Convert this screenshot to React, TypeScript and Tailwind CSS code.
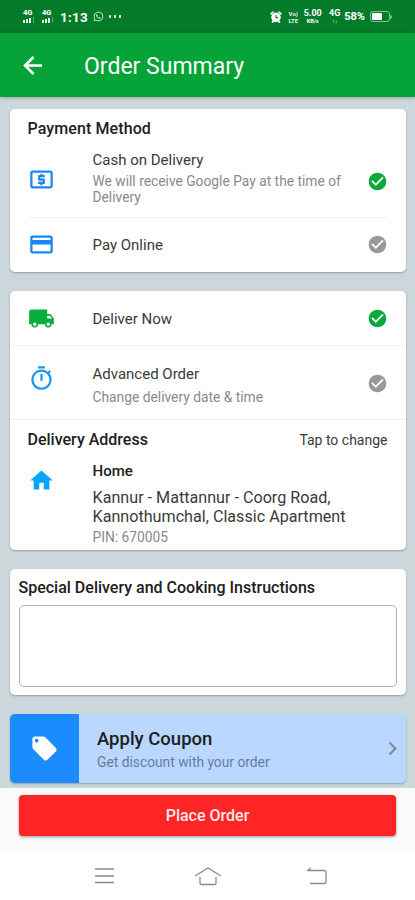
import { useState, type ReactNode } from 'react';
import {
  MdCheckCircle,
  MdChevronRight,
  MdHome,
  MdLocalOffer,
  MdLocalShipping,
  MdOutlineCreditCard,
  MdOutlineTimer,
} from 'react-icons/md';
import { FaWhatsapp } from 'react-icons/fa';

function BackIcon() {
  return (
    <svg viewBox="0 0 27 27" className="h-[27px] w-[27px]" fill="none" stroke="white" strokeWidth="2.600">
      <path d="M23 13.500H6.500M14.500 5L6 13.500L14.500 22" />
    </svg>
  );
}

function CashIcon() {
  return (
    <svg viewBox="0 0 24 24" className="h-[27px] w-[27px] text-[#1a86f5]" fill="currentColor">
      <path d="M20 4H4C2.900 4 2 4.900 2 6v12c0 1.100.9 2 2 2h16c1.100 0 2-.9 2-2V6c0-1.100-.9-2-2-2zm0 14H4V6h16v12z" />
      <path d="M11 17h2v-1h1c.55 0 1-.45 1-1v-3c0-.55-.45-1-1-1h-3v-1h4V8h-2V7h-2v1h-1c-.55 0-1 .45-1 1v3c0 .55.45 1 1 1h3v1H9v2h2v1z" />
    </svg>
  );
}

function AlarmIcon() {
  return (
    <svg viewBox="0 0 12 12" className="h-3 w-3">
      <path d="M1 2.800L3 1M11 2.800L9 1M2.500 11.300l1-1.300M9.500 11.300l-1-1.300" stroke="white" strokeWidth="1.6" strokeLinecap="round" />
      <circle cx="6" cy="6.300" r="4.800" fill="white" />
      <path d="M6 3.900v2.700h1.900" stroke="#047b29" strokeWidth="1.100" fill="none" />
    </svg>
  );
}

function SignalIcon() {
  return (
    <div className="flex w-3 flex-col">
      <span className="text-[7.5px] leading-[6px] font-bold">4G</span>
      <svg viewBox="0 0 12 6" className="mt-px h-1.5 w-3" fill="currentColor">
        <path d="M0 3h2v3H0zM3 2h2v4H3zM6 1h2v5H6z" />
        <path d="M10 0h1v6h-1z" opacity="0.35" />
      </svg>
    </div>
  );
}

function Stacked({ top, bottom }: { top: string; bottom: string }) {
  return (
    <div className="flex flex-col items-center font-bold">
      <span className="text-[9px] leading-[9px]">{top}</span>
      <span className="text-[5.500px] leading-[6px]">{bottom}</span>
    </div>
  );
}

function StatusBar() {
  return (
    <div className="flex h-[33px] shrink-0 items-center bg-[#047b29] pr-[23px] pl-[23px] text-white">
      <SignalIcon />
      <div className="ml-[7px]">
        <SignalIcon />
      </div>
      <span className="ml-[6px] pt-px text-[13.5px] font-bold tracking-[0.2px]">1:13</span>
      <FaWhatsapp className="ml-[5px] h-[11px] w-[11px] opacity-80" />
      <div className="ml-[5px] flex gap-[2.5px]">
        <i className="h-[2.5px] w-[2.5px] rounded-full bg-white" />
        <i className="h-[2.5px] w-[2.5px] rounded-full bg-white" />
        <i className="h-[2.5px] w-[2.5px] rounded-full bg-white" />
      </div>

      <div className="ml-auto flex items-center">
        <AlarmIcon />
        <div className="ml-[4px] flex w-[14px] flex-col items-center text-[6px] leading-[7px] font-bold opacity-90">
          <span>Vo)</span>
          <span>LTE</span>
        </div>
        <div className="ml-[3px] w-[19px]">
          <Stacked top="5.00" bottom="KB/s" />
        </div>
        <div className="ml-[6px] w-[13px]">
          <Stacked top="4G" bottom="↑↓" />
        </div>
        <span className="ml-[3px] pt-px text-[11px] font-bold">58%</span>
        <div className="ml-[5px] flex h-[11px] w-[20px] rounded-[3px] border border-white/50 p-px">
          <div className="w-[10px] rounded-[1px] bg-white" />
        </div>
        <div className="h-1 w-0.5 rounded-r bg-white/50" />
      </div>
    </div>
  );
}

function Card({ className, children }: { className: string; children: ReactNode }) {
  return (
    <section className={`overflow-hidden rounded-[5px] bg-white shadow-[0_1px_2px_rgba(0,0,0,0.28)] ${className}`}>
      {children}
    </section>
  );
}

function Check({ active, onClick }: { active: boolean; onClick: () => void }) {
  return (
    <button onClick={onClick} className="ml-auto">
      <MdCheckCircle className={`h-[21px] w-[21px] ${active ? 'text-[#08a839]' : 'text-[#989898]'}`} />
    </button>
  );
}

export default function App() {
  const [payment, setPayment] = useState('cash');
  const [schedule, setSchedule] = useState('now');

  return (
    <div className="flex h-[900px] w-[415px] flex-col overflow-hidden bg-[#ccd7dc] font-['Roboto',sans-serif] text-[#3a3a3a]">
      <StatusBar />
      <header className="flex h-16 shrink-0 items-center bg-[#05a338] pl-[19px] text-white shadow-[0_1px_4px_rgba(0,0,0,0.25)]">
        <BackIcon />
        <h1 className="ml-[38px] pt-1 text-[23px]">Order Summary</h1>
      </header>

      <main className="flex min-h-0 flex-1 flex-col gap-[19px] px-[9.5px] pt-3">
        {/* Payment */}
        <Card className="h-[163px] shrink-0 px-[18px] pt-[10px]">
          <h2 className="text-[16px] leading-5 font-medium tracking-[0.1px] text-[#202020]">Payment Method</h2>
          <div className="flex h-[79px] border-b border-[#f0f0f0] pt-[11px]">
            <div className="w-[65px] pt-4">
              <CashIcon />
            </div>
            <div className="w-[262px]">
              <p className="text-[15px] leading-5">Cash on Delivery</p>
              <p className="mt-[3px] text-[13.8px] leading-4 text-[#8a8a8a]">
                We will receive Google Pay at the time of Delivery
              </p>
            </div>
            <div className="ml-auto pt-[21px]">
              <Check active={payment === 'cash'} onClick={() => setPayment('cash')} />
            </div>
          </div>
          <div className="flex h-[53px] items-center">
            <div className="w-[65px]">
              <MdOutlineCreditCard className="h-[27px] w-[27px] text-[#1a86f5]" />
            </div>
            <p className="pt-px text-[15px]">Pay Online</p>
            <Check active={payment === 'online'} onClick={() => setPayment('online')} />
          </div>
        </Card>

        {/* Delivery time and address */}
        <Card className="h-[259px] shrink-0">
          <div className="flex h-[55px] items-center border-b border-[#f0f0f0] px-[18px]">
            <div className="w-[65px]">
              <MdLocalShipping className="h-[27px] w-[27px] text-[#08ad3c]" />
            </div>
            <p className="pt-[2px] text-[15px]">Deliver Now</p>
            <Check active={schedule === 'now'} onClick={() => setSchedule('now')} />
          </div>
          <div className="flex h-[74px] border-b border-[#f0f0f0] px-[18px] pt-[18px]">
            <div className="w-[65px] pt-[1px]">
              <MdOutlineTimer className="h-[27px] w-[27px] text-[#1a96f0]" />
            </div>
            <div>
              <p className="text-[15px] leading-5">Advanced Order</p>
              <p className="mt-[3px] text-[13.8px] leading-5 text-[#8a8a8a]">Change delivery date &amp; time</p>
            </div>
            <div className="ml-auto pt-[9px]">
              <Check active={schedule === 'later'} onClick={() => setSchedule('later')} />
            </div>
          </div>
          <div className="px-[18px] pt-[10px]">
            <div className="flex items-center justify-between">
              <h2 className="text-[16px] leading-5 font-medium text-[#202020]">Delivery Address</h2>
              <button className="text-[14px] leading-[18px]">Tap to change</button>
            </div>
            <div className="flex pt-[11px]">
              <div className="w-[65px] pt-[6px]">
                <MdHome className="h-[27px] w-[27px] text-[#08a4ff]" />
              </div>
              <div>
                <p className="text-[15px] leading-5 font-medium text-[#202020]">Home</p>
                <p className="mt-[7px] text-[16.15px] leading-[19px]">
                  Kannur - Mattannur - Coorg Road,
                  <br />
                  Kannothumchal, Classic Apartment
                </p>
                <p className="mt-[3px] text-[13.8px] leading-4 text-[#8a8a8a]">PIN: 670005</p>
              </div>
            </div>
          </div>
        </Card>

        {/* Instructions */}
        <Card className="h-[126px] shrink-0 px-[9px] pt-[9px]">
          <h2 className="text-[16px] leading-5 font-medium text-[#202020]">Special Delivery and Cooking Instructions</h2>
          <textarea className="mt-[7px] block h-[82px] w-full resize-none rounded-[5px] border border-[#b0b0b0] p-2 text-sm outline-none" />
        </Card>

        {/* Coupon */}
        <Card className="flex h-[69px] shrink-0 items-center bg-[#b9d7ff]!">
          <div className="flex h-full w-[69px] items-center justify-center bg-[#1b8bff]">
            <MdLocalOffer className="h-[29px] w-[29px] text-white" />
          </div>
          <div className="ml-[18.5px] pt-[2px]">
            <p className="text-[18.5px] leading-6 font-medium text-[#202020]">Apply Coupon</p>
            <p className="text-[13.8px] leading-[22px] text-[#667d9c]">Get discount with your order</p>
          </div>
          <MdChevronRight className="ml-auto h-[27px] w-[27px] text-[#858d98]" />
        </Card>
      </main>

      <footer className="h-16 shrink-0 bg-[#fafafa] px-[19px] pt-[7px]">
        <button className="h-[41px] w-full rounded-[4px] bg-[#ff2527] text-[16px] font-medium text-white/90 shadow-[0_1px_3px_rgba(0,0,0,0.4)]">
          Place Order
        </button>
      </footer>

      {/* System navigation */}
      <nav className="flex h-12 shrink-0 items-center bg-white pl-[95px] text-[#8b8b8b]">
        <svg viewBox="0 0 20 18" className="h-[18px] w-5" stroke="currentColor" strokeWidth="1.4" fill="none">
          <path d="M0 2h19M0 9h19M0 15.500h19" />
        </svg>
        <svg viewBox="0 0 28 20" className="ml-[79px] h-5 w-7" stroke="currentColor" strokeWidth="1.3" fill="none">
          <path d="M1 10L14 2l13 8M6 11v6.500q0 1 1 1h14q1 0 1-1V11" />
        </svg>
        <svg viewBox="0 0 22 18" className="ml-[84px] h-[18px] w-[22px]" stroke="currentColor" strokeWidth="1.3" fill="none">
          <path d="M1 3.500h17q2 0 2 2v9q0 2-2 2H4M5 1L1.500 3.500" />
        </svg>
      </nav>
    </div>
  );
}
